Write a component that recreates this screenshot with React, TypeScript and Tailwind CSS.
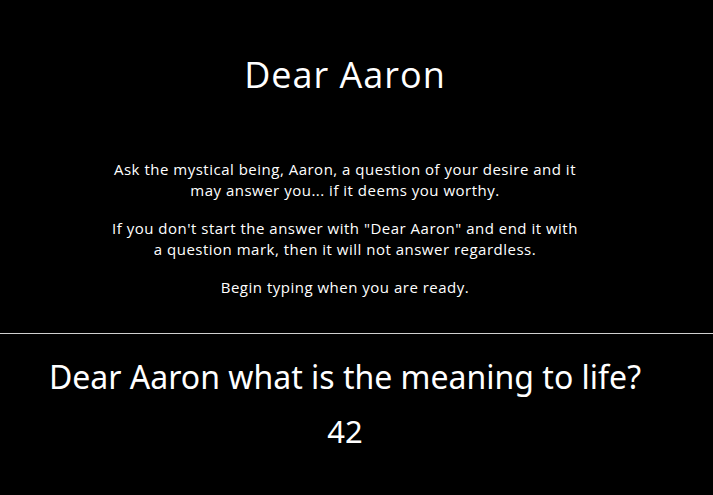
import React, { useState } from "react";

const App = () => {
  const [question, setQuestion] = useState("Dear Aaron what is the meaning to life?");

  return (
    <div className="min-h-screen w-full bg-black text-white overflow-hidden">
      {/* HEADER */}
      <div className="flex flex-col items-center pr-[23px] font-['Open_Sans',sans-serif]">
        <h1 className="mt-[53px] text-[36px] leading-[44px] tracking-[1px]">Dear Aaron</h1>
        <div className="mt-[62px] w-[470px] text-center text-[15px] leading-[21px] tracking-[0.5px]">
          <p>
            Ask the mystical being, Aaron, a question of your desire and it may answer you... if it deems
            you worthy.
          </p>
          <p className="mt-[17px]">
            If you don't start the answer with "Dear Aaron" and end it with a question mark, then it will
            not answer regardless.
          </p>
          <p className="mt-[17px]">Begin typing when you are ready.</p>
        </div>
      </div>

      <hr className="mt-[35px] border-t border-[#d0d0d0]" />

      {/* QUESTION + ANSWER */}
      <div className="flex flex-col items-center pr-[23px] font-['Noto_Sans',sans-serif]">
        <input
          value={question}
          onChange={(e) => setQuestion(e.target.value)}
          className="mt-[23px] w-full bg-transparent text-center text-[32px] leading-[40px] text-white outline-none"
        />
        <div className="mt-[14px] text-[31px] leading-[40px]">42</div>
      </div>
    </div>
  );
};

export default App;
